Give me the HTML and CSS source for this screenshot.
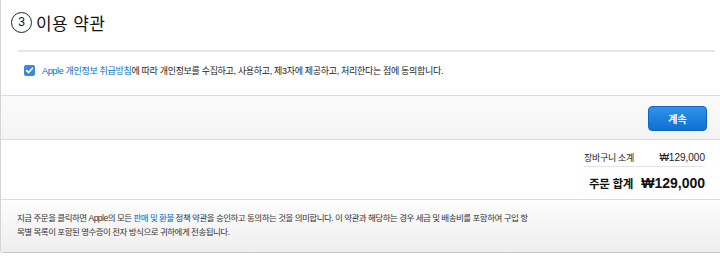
FILE: index.html
```html
<!DOCTYPE html>
<html lang="ko">
<head>
<meta charset="utf-8">
<title>이용 약관</title>
<link rel="stylesheet" href="styles.css">
</head>
<body>
<div class="card">
  <section class="terms">
    <h2 class="title"><span class="step">3</span><span class="title-text">이용 약관</span></h2>
    <div class="divider"></div>
    <label class="agree">
      <span class="check"><svg viewBox="0 0 11 11" width="11" height="11"><path d="M2.6 5.6 L4.6 7.6 L8.4 3.2" fill="none" stroke="#fff" stroke-width="1.6" stroke-linecap="round" stroke-linejoin="round"/></svg></span>
      <span class="agree-text"><a class="link" href="#">Apple 개인정보 취급방침</a>에 따라 개인정보를 수집하고, 사용하고, 제3자에 제공하고, 처리한다는 점에 동의합니다.</span>
    </label>
  </section>
  <div class="actions">
    <button class="btn" type="button">계속</button>
  </div>
  <section class="summary">
    <div class="totals">
      <div class="row sub"><span class="label">장바구니 소계</span><span class="amount">₩129,000</span></div>
      <div class="row total"><span class="label">주문 합계</span><span class="amount">₩129,000</span></div>
    </div>
  </section>
  <footer class="note">
    <p class="note-text">지금 주문을 클릭하면 Apple의 모든 <a class="link" href="#">판매 및 환불</a> 정책 약관을 승인하고 동의하는 것을 의미합니다. 이 약관과 해당하는 경우 세금 및 배송비를 포함하여 구입 항<br>목별 목록이 포함된 영수증이 전자 방식으로 귀하에게 전송됩니다.</p>
  </footer>
</div>
</body>
</html>
```
FILE: styles.css
```css
* { box-sizing: border-box; }
html, body { margin: 0; padding: 0; background: #fff; }
body {
  font-family: "Liberation Sans", "Noto Sans CJK KR", sans-serif;
  color: #333;
}
.card {
  border-left: 1px solid #d4d4d4;
  border-bottom: 1px solid #c8c8c8;
  border-bottom-left-radius: 4px;
  box-shadow: 0 1px 2px rgba(0,0,0,0.12);
  overflow: hidden;
}
.link { color: #0070c9; text-decoration: none; }

.terms {
  padding: 11px 5px 19px 17px;
  border-bottom: 1px solid #dcdcdc;
}
.title {
  margin: 0;
  display: flex;
  align-items: center;
  height: 22px;
  font-weight: normal;
  font-size: 17px;
  color: #111;
  margin-left: -7px;
}
.step {
  width: 21px;
  height: 21px;
  border: 1.5px solid #222;
  border-radius: 50%;
  display: inline-flex;
  align-items: center;
  justify-content: center;
  font-size: 12px;
  margin-right: 4px;
}
.title-text { letter-spacing: 0.4px; }
.divider {
  height: 2px;
  background: #e6e6e6;
  margin-top: 17px;
}
.agree {
  display: flex;
  align-items: center;
  margin-top: 12px;
  padding-left: 6px;
  height: 12px;
  font-size: 9px;
  letter-spacing: -0.32px;
  white-space: nowrap;
  color: #222;
}
.check {
  width: 11px;
  height: 11px;
  border-radius: 2px;
  background: #3b87e0;
  display: inline-flex;
  margin-right: 7px;
  flex: none;
}
.check svg { display: block; }

.actions {
  display: flex;
  justify-content: flex-end;
  padding: 10px 13px 8px;
  background: linear-gradient(#fbfbfb, #f3f3f3);
  border-bottom: 1px solid #dcdcdc;
}
.btn {
  width: 59px;
  height: 25px;
  border: 1px solid #0f64c2;
  border-radius: 4px;
  background: linear-gradient(#2f93ea, #0f6fd3);
  color: #fff;
  font-family: inherit;
  font-size: 10px;
  font-weight: bold;
  padding: 0;
}

.summary {
  padding: 11px 15px 6px 0;
  border-bottom: 1px solid #dcdcdc;
  display: flex;
  justify-content: flex-end;
}
.totals { width: 121px; }
.row {
  display: flex;
  justify-content: space-between;
  align-items: center;
  white-space: nowrap;
}
.sub {
  height: 16px;
  font-size: 10px;
  border-bottom: 1px solid #e3e3e3;
  padding-bottom: 2px;
  color: #222;
}
.sub .label { font-size: 9px; letter-spacing: -0.3px; }
.total {
  height: 26px;
  padding-top: 5px;
  padding-left: 5px;
  font-weight: bold;
  color: #111;
}
.total .label { font-size: 11.5px; letter-spacing: -0.3px; }
.total .amount { font-size: 14px; }

.note {
  padding: 11px 16px 13px;
  background: linear-gradient(#fdfdfd, #eeeeee);
}
.note-text {
  margin: 0;
  font-size: 8.5px;
  letter-spacing: -0.5px;
  line-height: 14px;
  color: #333;
}
```
